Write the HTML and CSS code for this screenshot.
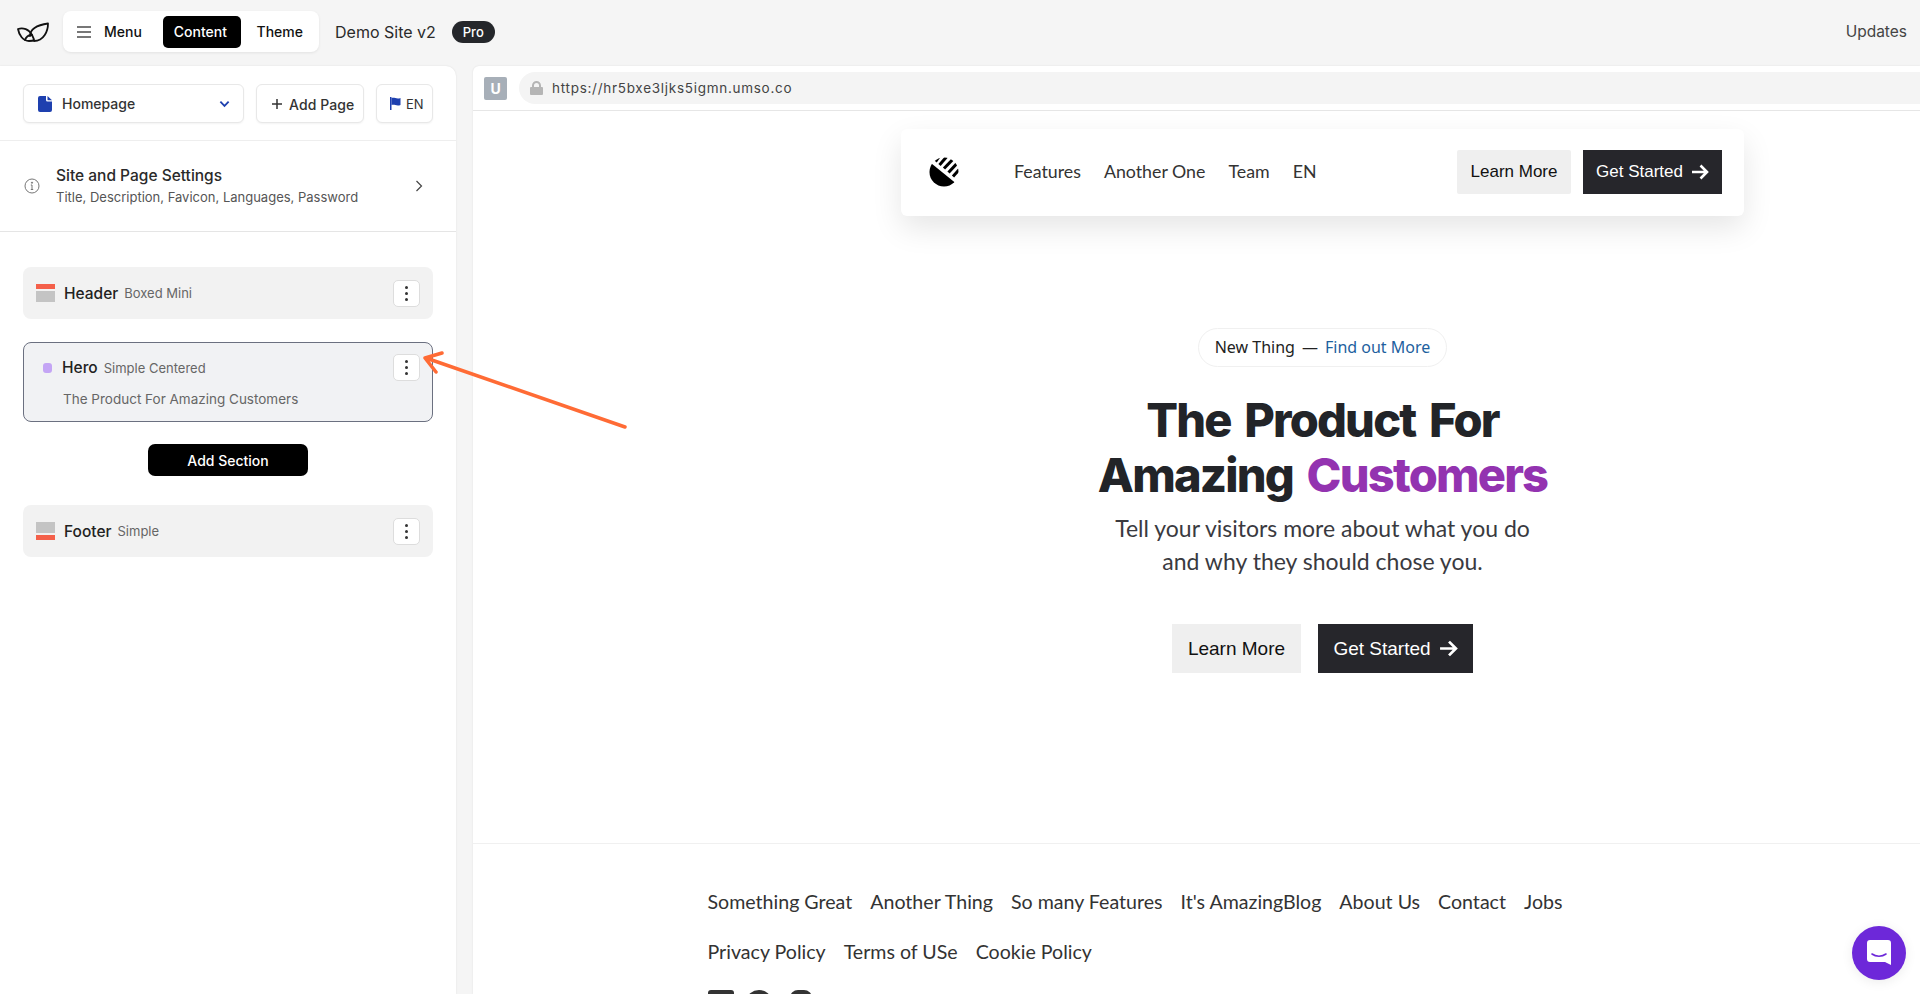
FILE: index.html
```html
<!DOCTYPE html>
<html lang="en">
<head>
<meta charset="utf-8">
<title>Demo Site v2</title>
<link rel="stylesheet" href="styles.css">
</head>
<body>
<div class="app">
  <header class="topbar">
    <svg class="brand" viewBox="0 0 32 20" width="32" height="20" fill="none" stroke="#111" stroke-width="1.800" stroke-linejoin="round" stroke-linecap="round"><path d="M1 7c5-1.500 11 0 14 6 1 2 2 4 2 5-1 1-3 1-5 1C6 19 2 13 1 7z"/><path d="M13 14c0-6 6-11 18-12.500C31 9 27 19 17 19"/><path d="M8 18c1-3 4-5 7-5"/></svg>
    <nav class="switcher">
      <span class="sw-item sw-menu"><svg class="burger" viewBox="0 0 14 12" width="14" height="12" fill="#777"><rect y="0" width="14" height="2"/><rect y="5" width="14" height="2"/><rect y="10" width="14" height="2"/></svg>Menu</span>
      <span class="sw-item sw-active">Content</span>
      <span class="sw-item">Theme</span>
    </nav>
    <span class="site-name">Demo Site v2</span>
    <span class="pro">Pro</span>
    <span class="updates">Updates</span>
  </header>

  <div class="workspace">
    <aside class="sidebar">
      <div class="page-row">
        <div class="ctl ctl-select">
          <svg viewBox="0 0 14 16" width="14" height="16" fill="#1e40af"><path d="M2 0h6v4a1.500 1.500 0 0 0 1.500 1.500H14V14a2 2 0 0 1-2 2H2a2 2 0 0 1-2-2V2a2 2 0 0 1 2-2z"/><path d="M9.500 0 14 4.300H10a.5.5 0 0 1-.5-.5z"/></svg>
          <span class="select-label">Homepage</span>
          <svg viewBox="0 0 12 8" width="11" height="8" fill="none" stroke="#1e40af" stroke-width="2"><path d="M1.500 1.500 6 6l4.500-4.500"/></svg>
        </div>
        <div class="ctl ctl-add"><svg viewBox="0 0 12 12" width="12" height="12" stroke="#333" stroke-width="1.500"><path d="M6 1v10M1 6h10"/></svg><span class="add-label">Add Page</span></div>
        <div class="ctl ctl-lang"><svg viewBox="0 0 12 13" width="12" height="13" fill="#1e40af"><path d="M1 0h1.500v13H1z"/><path d="M2.500 1c3-1 5 1.500 9 0v7c-4 1.500-6-1-9 0z"/></svg>EN</div>
      </div>
      <div class="settings">
        <svg class="info" viewBox="0 0 16 16" width="16" height="16" fill="none" stroke="#777" stroke-width="1"><circle cx="8" cy="8" r="7"/><path d="M8 7v4.500M6.800 11.500h2.400M6.800 7H8"/><circle cx="8" cy="4.700" r=".6" fill="#777"/></svg>
        <div class="settings-text">
          <div class="settings-title">Site and Page Settings</div>
          <div class="settings-sub">Title, Description, Favicon, Languages, Password</div>
        </div>
        <svg viewBox="0 0 8 12" width="8" height="12" fill="none" stroke="#444" stroke-width="1.200"><path d="M1.500 1 6.500 6l-5 5"/></svg>
      </div>
      <div class="sections">
        <div class="card">
          <span class="sec-ico"><i class="bar-red"></i><i class="bar-gray bar-big"></i></span>
          <span class="sec-name">Header</span><span class="sec-type">Boxed Mini</span>
          <span class="dots"><i></i><i></i><i></i></span>
        </div>
        <div class="card card-active">
          <div class="card-head">
            <span class="sec-dot"></span>
            <span class="sec-name">Hero</span><span class="sec-type">Simple Centered</span>
            <span class="dots"><i></i><i></i><i></i></span>
          </div>
          <div class="sec-desc">The Product For Amazing Customers</div>
        </div>
        <div class="add-section">Add Section</div>
        <div class="card">
          <span class="sec-ico"><i class="bar-gray bar-big"></i><i class="bar-red"></i></span>
          <span class="sec-name">Footer</span><span class="sec-type">Simple</span>
          <span class="dots"><i></i><i></i><i></i></span>
        </div>
      </div>
    </aside>

    <main class="preview">
      <div class="browserbar">
        <span class="u-badge">U</span>
        <div class="url">
          <svg viewBox="0 0 13 14" width="13" height="14" fill="#b5b5b5"><path d="M2 6V4.500a4.500 4.500 0 0 1 9 0V6h1a1 1 0 0 1 1 1v6a1 1 0 0 1-1 1H1a1 1 0 0 1-1-1V7a1 1 0 0 1 1-1zm2 0h5V4.500a2.500 2.500 0 0 0-5 0z"/></svg>
          <span>https://hr5bxe3ljks5igmn.umso.co</span>
        </div>
      </div>
      <div class="site">
        <div class="site-nav">
          <svg class="site-logo" viewBox="0 0 30 30" width="30" height="30"><defs><clipPath id="logoClip"><circle cx="15" cy="15" r="14.500"/></clipPath></defs><g clip-path="url(#logoClip)"><path d="M-2 3 29 28V32H-2z" fill="#000"/><g stroke="#000" stroke-width="3" fill="none"><path d="M6.500 4.500 12-3"/><path d="M10.500 8 20-3"/><path d="M15 11.500 29-3"/><path d="M19.500 15.500 34 0"/><path d="M24 19.500 36 6"/></g></g></svg>
          <div class="site-links"><span>Features</span><span>Another One</span><span>Team</span><span>EN</span></div>
          <span class="btn btn-light btn-nav">Learn More</span>
          <span class="btn btn-dark btn-nav">Get Started<svg viewBox="0 0 18 16" width="18" height="16" fill="none" stroke="#fff" stroke-width="2.600"><path d="M1 8h15M9.500 1.500 16 8l-6.500 6.500"/></svg></span>
        </div>
        <section class="hero">
          <div class="announce"><span>New Thing</span><span class="dash">—</span><span class="announce-link">Find out More</span></div>
          <h1 class="hero-title">The Product For<br>Amazing <span class="accent">Customers</span></h1>
          <p class="hero-sub">Tell your visitors more about what you do<br>and why they should chose you.</p>
          <div class="hero-btns">
            <span class="btn btn-light btn-hero">Learn More</span>
            <span class="btn btn-dark btn-hero">Get Started<svg viewBox="0 0 18 16" width="19" height="17" fill="none" stroke="#fff" stroke-width="2.600"><path d="M1 8h15M9.500 1.500 16 8l-6.500 6.500"/></svg></span>
          </div>
        </section>
        <footer class="site-footer">
          <div class="foot-inner">
            <div class="foot-row"><span>Something Great</span><span>Another Thing</span><span>So many Features</span><span>It's AmazingBlog</span><span>About Us</span><span>Contact</span><span>Jobs</span></div>
            <div class="foot-row"><span>Privacy Policy</span><span>Terms of USe</span><span>Cookie Policy</span></div>
            <div class="foot-social"><i class="soc soc-a"></i><i class="soc soc-b"></i><i class="soc soc-c"></i></div>
          </div>
        </footer>
      </div>
    </main>
  </div>
</div>
<svg class="arrow" viewBox="0 0 220 90" width="220" height="90" fill="none" stroke="#ff6b35" stroke-width="3.500" stroke-linecap="round" stroke-linejoin="round"><path d="M204 77 5 8M21 3 4 8l11 14"/></svg>
<div class="chat"><svg viewBox="0 0 26 28" width="26" height="28"><path d="M4 1h18a3 3 0 0 1 3 3v22l-6-3H4a3 3 0 0 1-3-3V4a3 3 0 0 1 3-3z" fill="#fff"/><path d="M6 15c4 3 10 3 14 0" fill="none" stroke="#6d28d9" stroke-width="1.600" stroke-linecap="round"/></svg></div>
</body>
</html>
```

FILE: styles.css
```css
* { box-sizing: border-box; }
html, body { margin: 0; height: 994px; overflow: hidden; }
body { background: #f5f5f5; font-family: "Inter", "Liberation Sans", sans-serif; color: #222; position: relative; }
i { display: block; }

.app { display: flex; flex-direction: column; height: 994px; }

.topbar { height: 66px; flex: none; display: flex; align-items: center; padding-left: 17px; padding-bottom: 3px; }
.brand { margin-right: 14px; }
.switcher { display: flex; align-items: center; height: 41px; width: 256px; padding: 0 5px; background: #fff; border-radius: 8px; box-shadow: 0 1px 3px rgba(0,0,0,.08); }
.sw-item { font-size: 14px; font-weight: 500; color: #111; height: 32px; display: flex; align-items: center; padding: 0 11px; border-radius: 5px; }
.sw-menu { gap: 13px; padding: 0 8px 0 9px; margin-right: 1px; width: 94px; }
.sw-active { background: #000; color: #fff; width: 78px; }
.sw-item:last-child { padding-left: 16px; }
.site-name { font-size: 16px; margin-left: 16px; color: #2a2a2a; }
.pro { margin-left: 16px; background: #25272b; color: #fff; font-size: 13px; font-weight: 500; border-radius: 11px; height: 22px; width: 43px; display: flex; align-items: center; justify-content: center; }
.updates { margin-left: auto; margin-right: 13px; font-size: 15.500px; color: #444; }

.workspace { flex: 1; display: flex; gap: 17px; min-height: 0; }

.sidebar { width: 456px; flex: none; background: #fff; border-radius: 0 10px 0 0; box-shadow: 0 0 2px rgba(0,0,0,.1); }
.page-row { display: flex; gap: 12px; height: 75px; padding: 18px 0 0 23px; border-bottom: 1px solid #eee; }
.ctl { flex: none; height: 39px; display: flex; align-items: center; background: #fff; border: 1px solid #e8e8e8; border-radius: 6px; box-shadow: 0 1px 2px rgba(0,0,0,.05); font-size: 14px; color: #333; }
.ctl-select { width: 221px; padding: 0 13px 0 14px; font-weight: 500; }
.select-label { flex: 1; margin-left: 10px; padding-bottom: 1px; }
.ctl-add { width: 108px; gap: 6px; padding-left: 14px; white-space: nowrap; font-weight: 500; }
.add-label { padding-top: 1px; letter-spacing: .1px; }
.ctl-lang { width: 57px; gap: 5px; padding-left: 12px; font-size: 13px; }

.settings { height: 91px; display: flex; align-items: center; padding: 0 33px 0 24px; border-bottom: 1px solid #e5e5e5; }
.info { margin-right: 16px; }
.settings-text { flex: 1; padding-bottom: 2px; }
.settings-title { font-size: 15.500px; font-weight: 500; color: #2a2a2a; margin-bottom: 4px; }
.settings-sub { font-size: 13px; color: #555; }

.sections { padding: 35px 23px 0; display: flex; flex-direction: column; }
.card { height: 52px; display: flex; align-items: center; background: #f2f2f2; border-radius: 8px; padding: 0 13px; }
.card + .card { margin-top: 23px; }
.card-active { display: block; height: 80px; padding: 11px 13px 0 19px; background: #f1f2f4; border: 1px solid #6b7080; }
.card-head { display: flex; align-items: center; }
.card-active .dots { margin-right: -1px; }
.sec-ico { width: 19px; display: flex; flex-direction: column; gap: 2px; margin-right: 9px; }
.bar-red { height: 5px; background: #f4604a; }
.bar-gray { height: 5px; background: #c4c4c4; }
.bar-big { height: 11px; }
.sec-dot { width: 9px; height: 10px; border-radius: 3px; background: #c4a5f5; margin-right: 10px; }
.sec-name { font-size: 15.500px; font-weight: 500; color: #222; }
.sec-type { font-size: 13px; color: #666; margin-left: 6px; }
.sec-desc { font-size: 13.500px; color: #666; margin: 10px 0 0 20px; }
.dots { margin-left: auto; width: 27px; height: 27px; background: #fff; border: 1px solid #ddd; border-radius: 5px; display: flex; flex-direction: column; align-items: center; justify-content: center; gap: 3px; }
.dots i { width: 3px; height: 3px; border-radius: 50%; background: #333; }
.add-section { align-self: center; width: 160px; height: 32px; margin: 22px 0 29px; background: #000; color: #fff; border-radius: 7px; font-size: 14px; font-weight: 500; display: flex; align-items: center; justify-content: center; }

.preview { flex: 1; min-width: 0; background: #fff; border-radius: 6px 0 0 0; overflow: hidden; box-shadow: 0 0 2px rgba(0,0,0,.1); }
.browserbar { height: 45px; display: flex; align-items: center; gap: 12px; padding-left: 11px; border-bottom: 1px solid #e6e6e6; }
.u-badge { width: 23px; height: 23px; background: #a7afb8; color: #fff; border-radius: 2px; font-size: 14px; font-weight: 700; display: flex; align-items: center; justify-content: center; }
.url { flex: 1; height: 32px; background: #f4f4f4; border-radius: 16px 0 0 16px; display: flex; align-items: center; gap: 9px; padding-left: 11px; font-size: 13.500px; color: #444; letter-spacing: .72px; }

.site { width: 1699px; }
.site-nav { width: 843px; height: 87px; margin: 18px auto 0; background: #fff; border-radius: 6px; box-shadow: 0 12px 30px rgba(0,0,0,.1); display: flex; align-items: center; padding: 0 22px 2px 28px; }
.site-logo { margin-right: 55px; }
.site-links { flex: 1; display: flex; gap: 23px; padding-bottom: 2px; font-family: "Lato", sans-serif; font-size: 17.800px; color: #333; }
.btn { display: flex; align-items: center; justify-content: center; font-family: "Liberation Sans", Arial, sans-serif; }
.btn-light { background: #efefef; color: #111; }
.btn-dark { background: #26262b; color: #fff; }
.btn-nav { height: 44px; font-size: 17px; gap: 8px; }
.btn-nav.btn-light { width: 114px; border-radius: 2px; margin-right: 12px; }
.btn-nav.btn-dark { width: 139px; }

.hero { display: flex; flex-direction: column; align-items: center; }
.announce { margin-top: 112px; height: 39px; width: 249px; border: 1px solid #f0f0f0; border-radius: 20px; display: flex; align-items: center; justify-content: center; gap: 7px; font-family: "Noto Sans", sans-serif; font-size: 16px; color: #222; padding-bottom: 2px; }
.announce-link { color: #1e5f9e; }
.hero-title { margin: 25px 0 0; font-size: 47px; line-height: 55px; font-weight: 800; text-align: center; color: #222428; letter-spacing: -1.800px; word-spacing: 5px; }
.accent { color: #9333b0; }
.hero-sub { margin: 10px 0 0; font-family: "Lato", sans-serif; font-size: 23px; line-height: 33px; color: #3a3a3f; text-align: center; }
.hero-btns { display: flex; gap: 17px; margin-top: 46px; }
.btn-hero { height: 49px; font-size: 19px; gap: 8px; }
.btn-hero.btn-light { width: 129px; }
.btn-hero.btn-dark { width: 155px; }

.site-footer { margin-top: 170px; border-top: 1px solid #f0f0f0; }
.foot-inner { width: 1230px; margin: 0 auto; padding-top: 46px; }
.foot-row { display: flex; gap: 18px; font-family: "Lato", sans-serif; font-size: 19.600px; line-height: 24px; color: #333; margin-bottom: 26px; }
.foot-social { display: flex; gap: 13px; margin-top: 2px; }
.soc { width: 26px; height: 20px; background: #333; border-radius: 3px; }
.soc-b { width: 24px; border-radius: 50%; }
.soc-c { width: 22px; margin-left: 6px; border-radius: 8px; }

.arrow { position: absolute; left: 421px; top: 350px; }
.chat { position: absolute; left: 1852px; top: 926px; width: 54px; height: 54px; border-radius: 50%; background: #6d28d9; display: flex; align-items: center; justify-content: center; box-shadow: 0 2px 12px rgba(0,0,0,.08); }
```
